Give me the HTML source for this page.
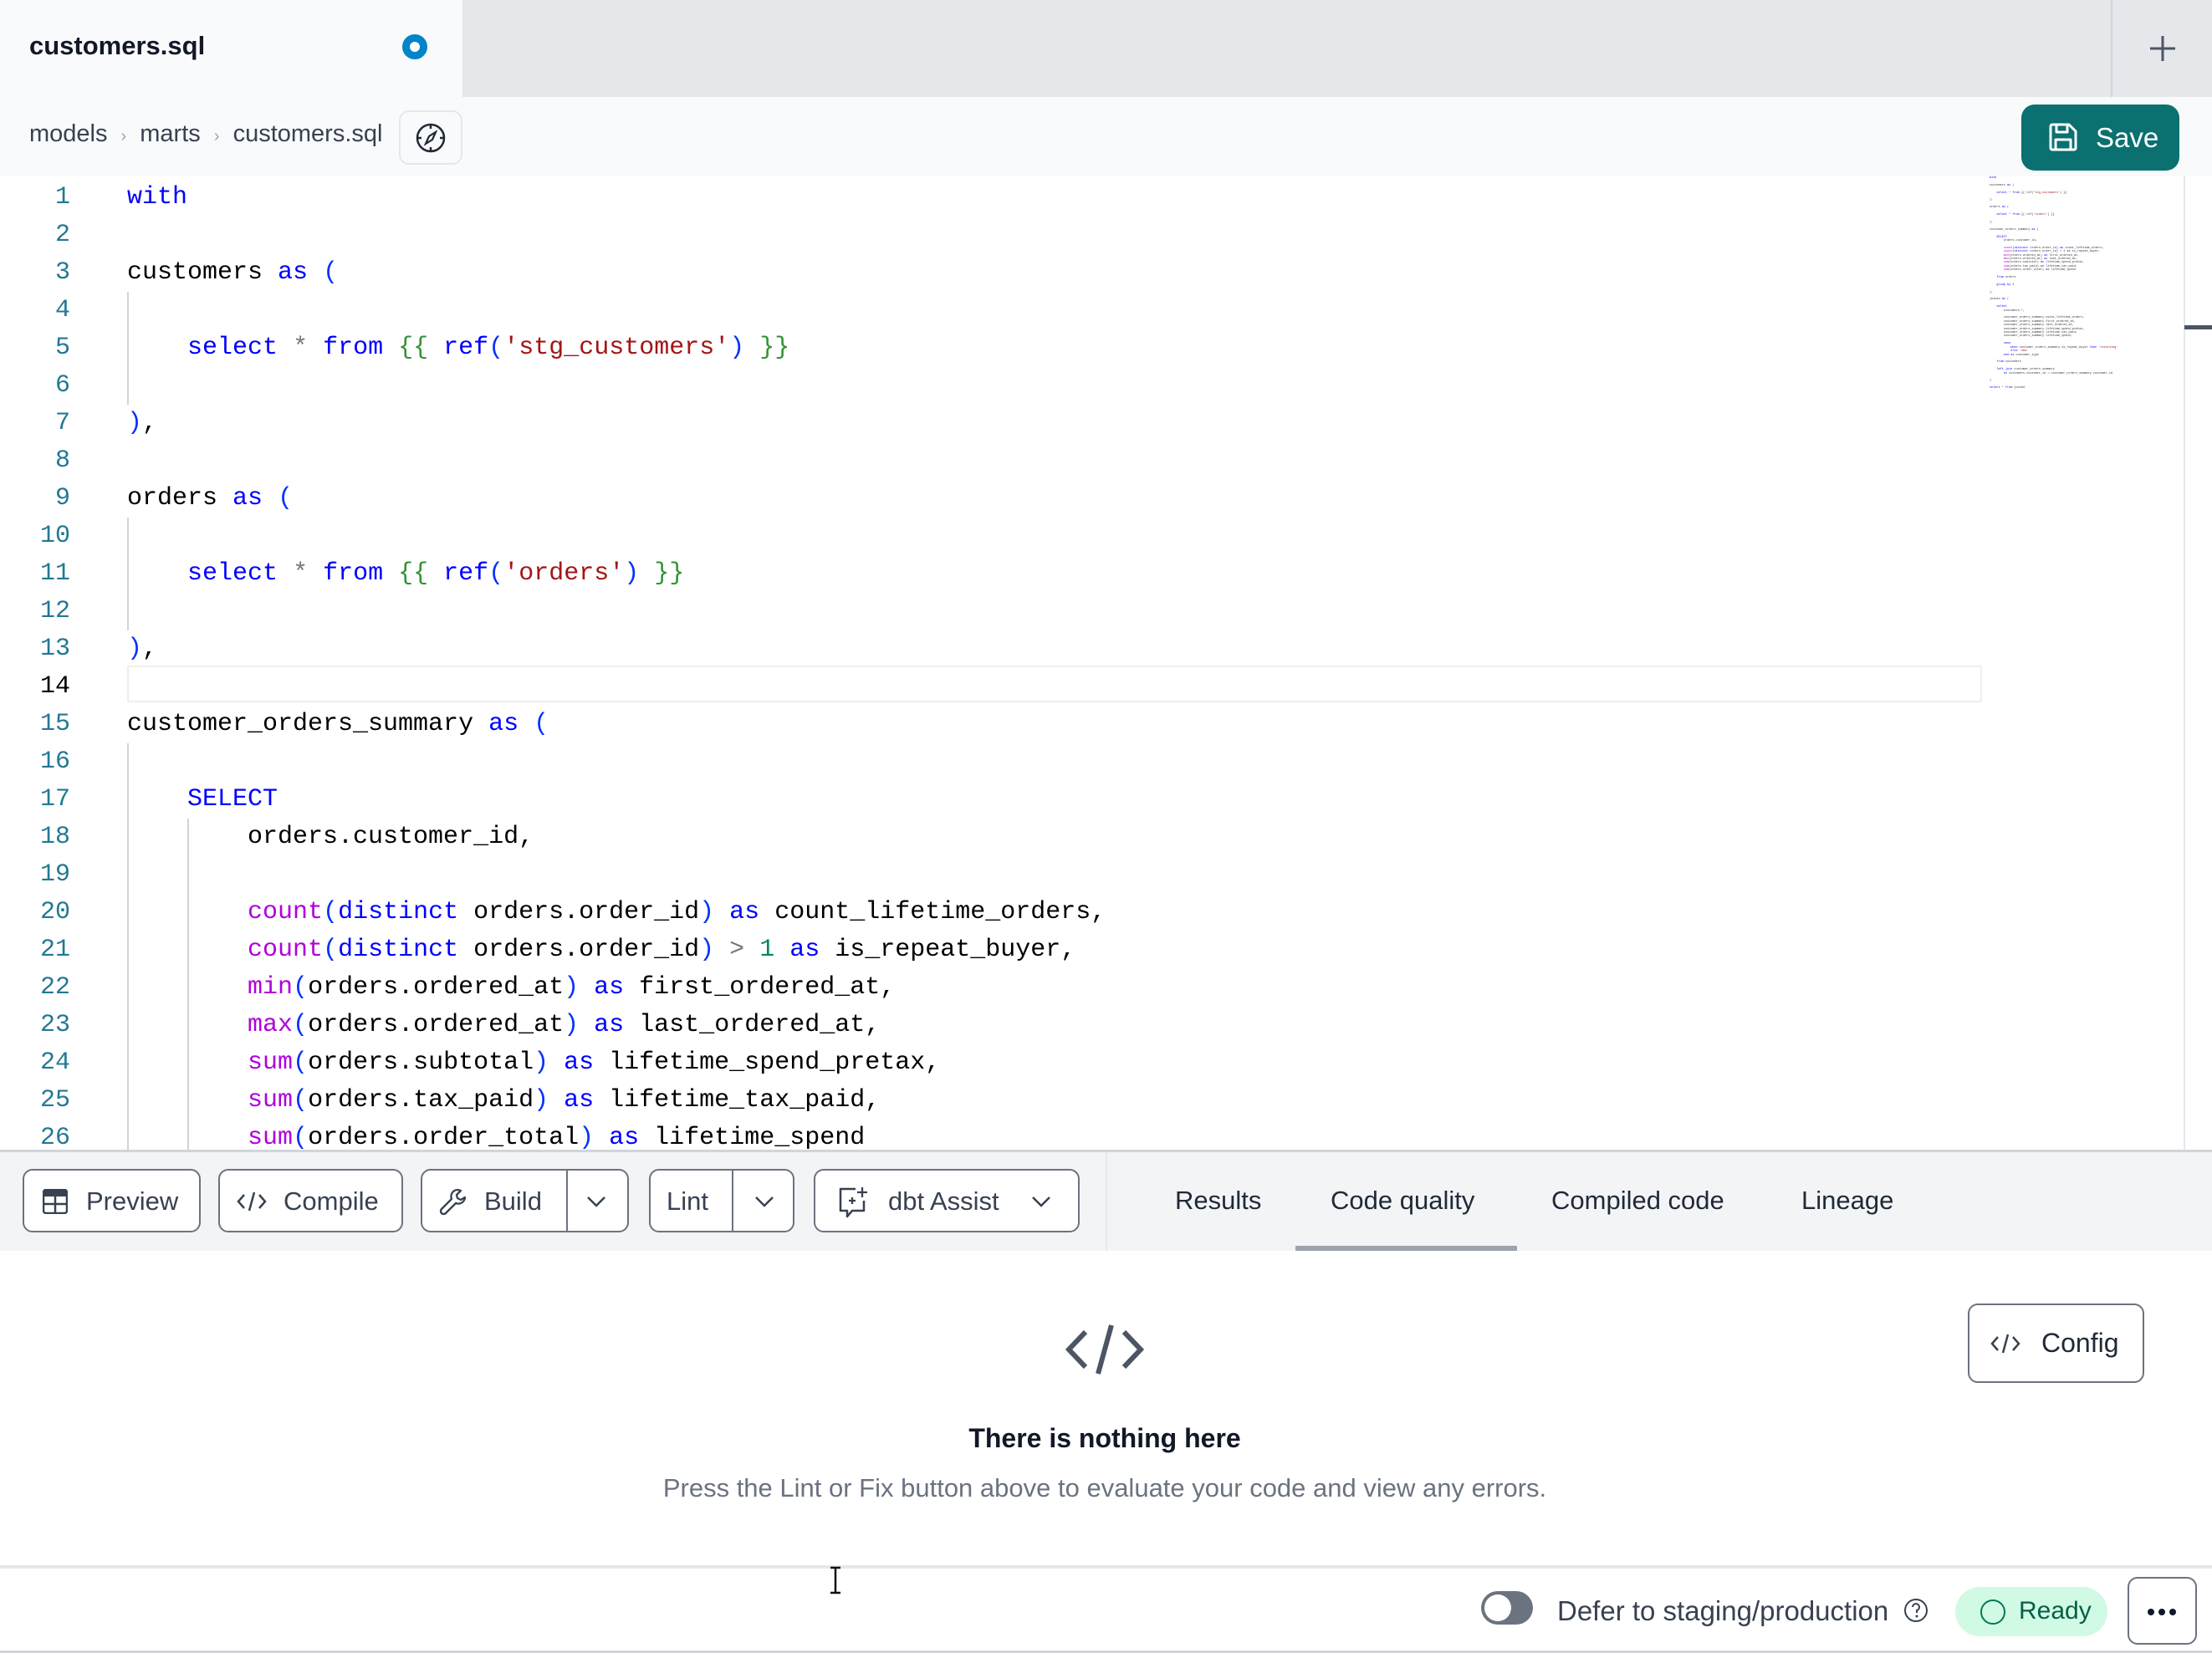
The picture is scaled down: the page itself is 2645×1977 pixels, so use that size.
<!DOCTYPE html>
<html><head><meta charset="utf-8">
<style>
*{box-sizing:border-box;margin:0;padding:0}
body{width:2645px;height:1977px;position:relative;overflow:hidden;background:#fff;font-family:"Liberation Sans",sans-serif;color:#111827}
.a{position:absolute}
.lnums{position:absolute;left:0;top:214px;width:84px;text-align:right;font-family:"Liberation Mono",monospace;font-size:30px;line-height:45px;color:#237893;white-space:pre}
.code{position:absolute;left:152px;top:214px;width:2220px;height:1161px;overflow:hidden;font-family:"Liberation Mono",monospace;font-size:30px;line-height:45px;white-space:pre;color:#000}
.k{color:#0000ff}.s{color:#a31515}.j{color:#319331}.f{color:#af00db}.n{color:#098658}.o{color:#777}.p{color:#0431fa}
.btn{position:absolute;top:1398px;height:76px;border:2px solid #6b7280;border-radius:12px;background:#fff;color:#374151;font-size:31px}
.btn span{position:absolute;top:19px;white-space:nowrap}
.tab{position:absolute;top:1418px;font-size:31px;color:#1f2937;white-space:nowrap}
.mini{position:absolute;left:2379px;top:211px;font-family:"Liberation Mono",monospace;font-size:3.5px;line-height:4.4px;white-space:pre;color:#333}
.g{position:absolute;width:2px;background:#d4d4d4}
</style></head><body>
<!-- tab bar -->
<div class="a" style="left:0;top:0;width:2645px;height:116px;background:#e5e7eb"></div>
<div class="a" style="left:0;top:0;width:553px;height:116px;background:#f9fafb"></div>
<div class="a" style="left:35px;top:37px;font-size:31px;font-weight:bold;color:#111827">customers.sql</div>
<div class="a" style="left:481px;top:41px;width:30px;height:30px;border-radius:50%;border:9px solid #0284c7;background:#fff"></div>
<div class="a" style="left:2524px;top:0;width:2px;height:116px;background:#d1d5db"></div>
<svg class="a" style="left:2570px;top:42px" width="32" height="32"><path d="M16 1V31M1 16H31" stroke="#4b5563" stroke-width="3"/></svg>
<!-- breadcrumb -->
<div class="a" style="left:0;top:116px;width:2645px;height:95px;background:#f9fafb"></div>
<div class="a" style="left:35px;top:144px;font-size:29px;color:#374151;white-space:nowrap">models <span style="color:#9ca3af;font-size:20px;margin:0 8px">›</span> marts <span style="color:#9ca3af;font-size:20px;margin:0 8px">›</span> customers.sql</div>
<div class="a" style="left:477px;top:132px;width:76px;height:65px;border:2px solid #e5e7eb;border-radius:12px;background:#f9fafb"></div>
<svg class="a" style="left:496px;top:146px" width="38" height="38" viewBox="0 0 38 38"><circle cx="19" cy="19" r="16" fill="none" stroke="#1f2937" stroke-width="2.5"/><path d="M19 3v5M19 30v5M3 19h5M30 19h5" stroke="#1f2937" stroke-width="2.5"/><path d="M25 12l-4 9-8 5 4-9z" fill="none" stroke="#1f2937" stroke-width="2.2"/></svg>
<div class="a" style="left:2417px;top:125px;width:189px;height:79px;background:#0b7070;border-radius:16px"></div>
<svg class="a" style="left:2449px;top:146px" width="36" height="36" viewBox="0 0 36 36"><path d="M3 5a2 2 0 0 1 2-2h20l8 8v20a2 2 0 0 1-2 2H5a2 2 0 0 1-2-2z M10 3v9h13V3 M9 33V21h18v12" fill="none" stroke="#fff" stroke-width="3" stroke-linejoin="round"/></svg>
<div class="a" style="left:2506px;top:146px;font-size:33px;color:#fff">Save</div>
<!-- editor -->
<div class="a" style="left:152px;top:796px;width:2218px;height:44px;border:2px solid #eeeeee"></div>
<div class="g" style="left:152px;top:349px;height:135px"></div>
<div class="g" style="left:152px;top:619px;height:135px"></div>
<div class="g" style="left:152px;top:889px;height:486px"></div>
<div class="g" style="left:224px;top:979px;height:396px"></div>
<div class="lnums">1
2
3
4
5
6
7
8
9
10
11
12
13
<span style="color:#000">14</span>
15
16
17
18
19
20
21
22
23
24
25
26</div>
<div class="code"><span class="k">with</span>

customers <span class="k">as</span> <span class="p">(</span>

    <span class="k">select</span> <span class="o">*</span> <span class="k">from</span> <span class="j">{{</span> <span class="k">ref</span><span class="p">(</span><span class="s">'stg_customers'</span><span class="p">)</span> <span class="j">}}</span>

<span class="p">)</span>,

orders <span class="k">as</span> <span class="p">(</span>

    <span class="k">select</span> <span class="o">*</span> <span class="k">from</span> <span class="j">{{</span> <span class="k">ref</span><span class="p">(</span><span class="s">'orders'</span><span class="p">)</span> <span class="j">}}</span>

<span class="p">)</span>,

customer_orders_summary <span class="k">as</span> <span class="p">(</span>

    <span class="k">SELECT</span>
        orders.customer_id,

        <span class="f">count</span><span class="p">(</span><span class="k">distinct</span> orders.order_id<span class="p">)</span> <span class="k">as</span> count_lifetime_orders,
        <span class="f">count</span><span class="p">(</span><span class="k">distinct</span> orders.order_id<span class="p">)</span> <span class="o">&gt;</span> <span class="n">1</span> <span class="k">as</span> is_repeat_buyer,
        <span class="f">min</span><span class="p">(</span>orders.ordered_at<span class="p">)</span> <span class="k">as</span> first_ordered_at,
        <span class="f">max</span><span class="p">(</span>orders.ordered_at<span class="p">)</span> <span class="k">as</span> last_ordered_at,
        <span class="f">sum</span><span class="p">(</span>orders.subtotal<span class="p">)</span> <span class="k">as</span> lifetime_spend_pretax,
        <span class="f">sum</span><span class="p">(</span>orders.tax_paid<span class="p">)</span> <span class="k">as</span> lifetime_tax_paid,
        <span class="f">sum</span><span class="p">(</span>orders.order_total<span class="p">)</span> <span class="k">as</span> lifetime_spend
</div>
<!-- minimap -->
<div class="mini"><span class="k">with</span>

customers <span class="k">as</span> (

    <span class="k">select</span> * <span class="k">from</span> {{ ref(<span class="s">'stg_customers'</span>) }}

),

orders <span class="k">as</span> (

    <span class="k">select</span> * <span class="k">from</span> {{ ref(<span class="s">'orders'</span>) }}

),

customer_orders_summary <span class="k">as</span> (

    <span class="k">SELECT</span>
        orders.customer_id,

        <span class="f">count</span>(<span class="k">distinct</span> orders.order_id) <span class="k">as</span> count_lifetime_orders,
        <span class="f">count</span>(<span class="k">distinct</span> orders.order_id) &gt; 1 <span class="k">as</span> is_repeat_buyer,
        <span class="f">min</span>(orders.ordered_at) <span class="k">as</span> first_ordered_at,
        <span class="f">max</span>(orders.ordered_at) <span class="k">as</span> last_ordered_at,
        <span class="f">sum</span>(orders.subtotal) <span class="k">as</span> lifetime_spend_pretax,
        <span class="f">sum</span>(orders.tax_paid) <span class="k">as</span> lifetime_tax_paid,
        <span class="f">sum</span>(orders.order_total) <span class="k">as</span> lifetime_spend

    <span class="k">from</span> orders

    <span class="k">group by</span> 1

),

joined <span class="k">as</span> (

    <span class="k">select</span>
        customers.*,

        customer_orders_summary.count_lifetime_orders,
        customer_orders_summary.first_ordered_at,
        customer_orders_summary.last_ordered_at,
        customer_orders_summary.lifetime_spend_pretax,
        customer_orders_summary.lifetime_tax_paid,
        customer_orders_summary.lifetime_spend,

        <span class="k">case</span>
            <span class="k">when</span> customer_orders_summary.is_repeat_buyer <span class="k">then</span> <span class="s">'returning'</span>
            <span class="k">else</span> <span class="s">'new'</span>
        <span class="k">end as</span> customer_type

    <span class="k">from</span> customers

    <span class="k">left join</span> customer_orders_summary
        <span class="k">on</span> customers.customer_id = customer_orders_summary.customer_id

)

<span class="k">select</span> * <span class="k">from</span> joined</div>
<div class="a" style="left:2611px;top:211px;width:2px;height:1164px;background:#e5e7eb"></div>
<div class="a" style="left:2612px;top:389px;width:33px;height:5px;background:#4b5563"></div>
<!-- toolbar -->
<div class="a" style="left:0;top:1375px;width:2645px;height:121px;background:#f3f4f6;border-top:3px solid #d1d5db"></div>
<div class="a" style="left:1322px;top:1378px;width:2px;height:118px;background:#e5e7eb"></div>
<div class="btn" style="left:27px;width:213px"><svg class="a" style="left:22px;top:22px" width="30" height="30" viewBox="0 0 30 30"><rect x="1" y="1" width="28" height="28" rx="3" fill="none" stroke="#374151" stroke-width="2.5"/><rect x="1" y="1" width="28" height="8" fill="#374151"/><path d="M1 18h28M15 9v20" stroke="#374151" stroke-width="2.5"/></svg><span style="left:74px">Preview</span></div>
<div class="btn" style="left:261px;width:221px"><svg class="a" style="left:20px;top:24px" width="36" height="26" viewBox="0 0 36 26"><path d="M9 5L2 13l7 8M27 5l7 8-7 8M21 2l-6 22" fill="none" stroke="#374151" stroke-width="2.5"/></svg><span style="left:76px">Compile</span></div>
<div class="btn" style="left:503px;width:249px"><svg class="a" style="left:20px;top:20px" width="34" height="34" viewBox="0 0 34 34"><path d="M22 3a8 8 0 0 0-7 11L3 26a3 3 0 0 0 5 5l12-12a8 8 0 0 0 11-7l-5 3-4-2-1-4 5-5z" fill="none" stroke="#374151" stroke-width="2.3" stroke-linejoin="round"/></svg><span style="left:74px">Build</span><div class="a" style="left:172px;top:0;width:2px;height:72px;background:#6b7280"></div><svg class="a" style="left:196px;top:30px" width="24" height="14"><path d="M2 2l10 10 10-10" fill="none" stroke="#374151" stroke-width="2.5"/></svg></div>
<div class="btn" style="left:776px;width:174px"><span style="left:19px">Lint</span><div class="a" style="left:97px;top:0;width:2px;height:72px;background:#6b7280"></div><svg class="a" style="left:124px;top:30px" width="24" height="14"><path d="M2 2l10 10 10-10" fill="none" stroke="#374151" stroke-width="2.5"/></svg></div>
<div class="btn" style="left:973px;width:318px"><svg class="a" style="left:26px;top:18px" width="40" height="40" viewBox="0 0 40 40"><path d="M22 4H4v26h8v7l6-7h14V18" fill="none" stroke="#374151" stroke-width="2.5" stroke-linejoin="round"/><path d="M30 2v12M24 8h12M18 14v8M14 18h8" stroke="#374151" stroke-width="2.3"/></svg><span style="left:87px">dbt Assist</span><svg class="a" style="left:258px;top:30px" width="24" height="14"><path d="M2 2l10 10 10-10" fill="none" stroke="#374151" stroke-width="2.5"/></svg></div>
<div class="tab" style="left:1405px">Results</div>
<div class="tab" style="left:1591px">Code quality</div>
<div class="tab" style="left:1855px">Compiled code</div>
<div class="tab" style="left:2154px">Lineage</div>
<div class="a" style="left:1549px;top:1490px;width:265px;height:6px;background:#9ca3af"></div>
<!-- empty state -->
<svg class="a" style="left:1274px;top:1583px" width="94" height="62" viewBox="0 0 94 62"><path d="M24 10L4 31l20 21M70 10l20 21-20 21M55 2L39 60" fill="none" stroke="#4b5563" stroke-width="6"/></svg>
<div class="a" style="left:0;top:1702px;width:2642px;text-align:center;font-size:32px;font-weight:bold;color:#111827">There is nothing here</div>
<div class="a" style="left:0;top:1762px;width:2642px;text-align:center;font-size:31px;color:#6b7280">Press the Lint or Fix button above to evaluate your code and view any errors.</div>
<div class="a" style="left:2353px;top:1559px;width:211px;height:95px;border:2px solid #6b7280;border-radius:12px"></div>
<svg class="a" style="left:2380px;top:1594px" width="36" height="26" viewBox="0 0 36 26"><path d="M9 5L2 13l7 8M27 5l7 8-7 8M21 2l-6 22" fill="none" stroke="#374151" stroke-width="2.5"/></svg>
<div class="a" style="left:2441px;top:1588px;font-size:32px;color:#1f2937">Config</div>
<!-- footer -->
<div class="a" style="left:0;top:1872px;width:2645px;height:4px;background:#e5e7eb"></div>
<div class="a" style="left:0;top:1974px;width:2645px;height:3px;background:#d1d5db"></div>
<svg class="a" style="left:990px;top:1873px" width="18" height="34"><path d="M3 2h12M9 2v30M3 32h12" stroke="#111" stroke-width="2.5"/></svg>
<div class="a" style="left:1771px;top:1903px;width:62px;height:40px;border-radius:20px;background:#6b7280"></div>
<div class="a" style="left:1775px;top:1907px;width:32px;height:32px;border-radius:50%;background:#fff"></div>
<div class="a" style="left:1862px;top:1908px;font-size:33px;color:#374151;white-space:nowrap">Defer to staging/production</div>
<svg class="a" style="left:2276px;top:1911px" width="30" height="30" viewBox="0 0 30 30"><circle cx="15" cy="15" r="13" fill="none" stroke="#374151" stroke-width="2"/><path d="M11 11a4 4 0 1 1 5 4v3" fill="none" stroke="#374151" stroke-width="2"/><circle cx="16" cy="22" r="1.5" fill="#374151"/></svg>
<div class="a" style="left:2338px;top:1898px;width:182px;height:59px;border-radius:30px;background:#d1fae5"></div>
<div class="a" style="left:2368px;top:1913px;width:30px;height:30px;border-radius:50%;border:2.5px solid #047857"></div>
<div class="a" style="left:2414px;top:1910px;font-size:30px;color:#065f46">Ready</div>
<div class="a" style="left:2544px;top:1886px;width:83px;height:81px;border:2px solid #6b7280;border-radius:12px;background:#fff"></div>
<div class="a" style="left:2568px;top:1924px;width:34px;height:8px;display:flex;justify-content:space-between"><i style="width:8px;height:8px;border-radius:50%;background:#111827"></i><i style="width:8px;height:8px;border-radius:50%;background:#111827"></i><i style="width:8px;height:8px;border-radius:50%;background:#111827"></i></div>
</body></html>
